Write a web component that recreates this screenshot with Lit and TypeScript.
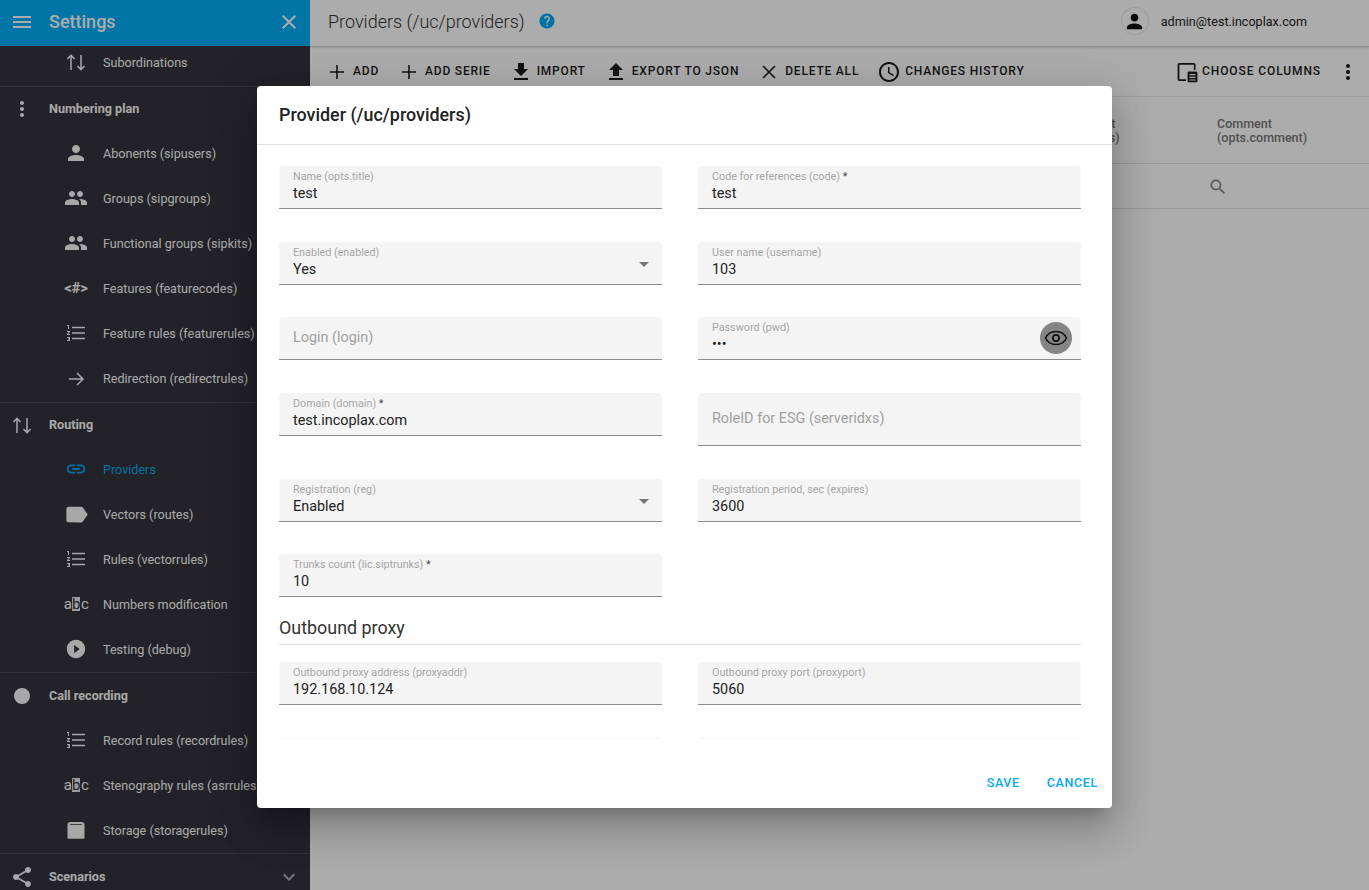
import { LitElement, html, svg, css } from "lit";
import { customElement } from "lit/decorators.js";

const p = (d: string) => svg`<path d=${d}></path>`;
const line = (d: string, w = 1.5) =>
  svg`<path d=${d} fill="none" stroke="currentColor" stroke-width=${w}></path>`;
const numbered = svg`<path d="M3 17h2v.5H4v1h1v.5H3v1h3v-4H3v1zm1-9h1V4H3v1h1v3zm-1 3h1.8L3 13.1v.9h3v-1H4.2L6 10.9V10H3v1z"></path><path d="M8 6.5H21M8 12H21M8 17.5H21" fill="none" stroke="currentColor" stroke-width="1.4"></path>`;
const I: Record<string, any> = {
  menu: p("M3 18h18v-2H3v2zm0-5h18v-2H3v2zm0-7v2h18V6H3z"),
  close: p("M19 6.41L17.59 5 12 10.59 6.41 5 5 6.41 10.59 12 5 17.59 6.41 19 12 13.41 17.59 19 19 17.59 13.41 12z"),
  swap: line("M7 20V5.5M3.4 9 7 5.4 10.6 9M17 5v14.5M13.4 16 17 19.6 20.6 16"),
  dots: p("M12 8c1.1 0 2-.9 2-2s-.9-2-2-2-2 .9-2 2 .9 2 2 2zm0 2c-1.1 0-2 .9-2 2s.9 2 2 2 2-.9 2-2-.9-2-2-2zm0 6c-1.1 0-2 .9-2 2s.9 2 2 2 2-.9 2-2-.9-2-2-2z"),
  person: p("M12 12c2.21 0 4-1.79 4-4s-1.79-4-4-4-4 1.79-4 4 1.79 4 4 4zm0 2c-2.67 0-8 1.34-8 4v2h16v-2c0-2.66-5.33-4-8-4z"),
  group: p("M16 11c1.66 0 2.99-1.34 2.99-3S17.66 5 16 5c-1.66 0-3 1.34-3 3s1.34 3 3 3zm-8 0c1.66 0 2.99-1.34 2.99-3S9.66 5 8 5C6.34 5 5 6.34 5 8s1.34 3 3 3zm0 2c-2.33 0-7 1.17-7 3.5V19h14v-2.5c0-2.33-4.67-3.5-7-3.5zm8 0c-.29 0-.62.02-.97.05 1.16.84 1.97 1.97 1.97 3.45V19h6v-2.5c0-2.33-4.67-3.5-7-3.5z"),
  numbered,
  arrow: line("M5 13H19M13 7 19 13 13 19"),
  link: p("M3.9 12c0-1.71 1.39-3.1 3.1-3.1h4V7H7c-2.76 0-5 2.24-5 5s2.24 5 5 5h4v-1.9H7c-1.71 0-3.1-1.39-3.1-3.1zM8 13h8v-2H8v2zm9-6h-4v1.9h4c1.71 0 3.1 1.39 3.1 3.1s-1.39 3.1-3.1 3.1h-4V17h4c2.76 0 5-2.24 5-5s-2.24-5-5-5z"),
  label: p("M17.63 5.84C17.27 5.33 16.67 5 16 5L5 5.01C3.9 5.01 3 5.9 3 7v10c0 1.1.9 1.99 2 1.99L16 19c.67 0 1.27-.33 1.63-.84L22 12l-4.37-6.16z"),
  play: p("M12 2C6.48 2 2 6.48 2 12s4.48 10 10 10 10-4.48 10-10S17.52 2 12 2zm-2 14.5v-9l6 4.5-6 4.5z"),
  circle: svg`<circle cx="12" cy="12" r="8"></circle>`,
  storage: svg`<path fill-rule="evenodd" d="M6.5 4h11C19.4 4 20.5 5.2 20.5 7v12.2c0 .9-.7 1.6-1.6 1.6H5.1c-.9 0-1.6-.7-1.6-1.6V7C3.5 5.2 4.6 4 6.5 4zM6 6.2v.8h12v-.8z"></path>`,
  share: p("M18 16.08c-.76 0-1.44.3-1.96.77L8.91 12.7c.05-.23.09-.46.09-.7s-.04-.47-.09-.7l7.05-4.11c.54.5 1.25.81 2.04.81 1.66 0 3-1.34 3-3s-1.34-3-3-3-3 1.34-3 3c0 .24.04.47.09.7L8.04 9.81C7.5 9.31 6.79 9 6 9c-1.66 0-3 1.34-3 3s1.34 3 3 3c.79 0 1.5-.31 2.04-.81l7.12 4.16c-.05.21-.08.43-.08.65 0 1.61 1.31 2.92 2.92 2.92 1.61 0 2.92-1.31 2.92-2.92s-1.31-2.92-2.92-2.92z"),
  chevron: p("M16.59 8.59L12 13.17 7.41 8.59 6 10l6 6 6-6z"),
  help: p("M12 2C6.48 2 2 6.48 2 12s4.48 10 10 10 10-4.48 10-10S17.52 2 12 2zm1 17h-2v-2h2v2zm2.07-7.75l-.9.92C13.45 12.9 13 13.5 13 15h-2v-.5c0-1.1.45-2.1 1.17-2.83l1.24-1.26c.37-.36.59-.86.59-1.41 0-1.1-.9-2-2-2s-2 .9-2 2H8c0-2.21 1.79-4 4-4s4 1.79 4 4c0 .88-.36 1.68-.93 2.25z"),
  add: line("M12 5V19M5 12H19", 1.6),
  del: line("M6 6L18 18M18 6L6 18", 1.6),
  download: p("M19 9h-4V3H9v6H5l7 7 7-7zM5 18v2h14v-2H5z"),
  upload: p("M9 16h6v-6h4l-7-7-7 7h4zm-4 2h14v2H5z"),
  clock: p("M11.99 2C6.47 2 2 6.48 2 12s4.47 10 9.99 10C17.52 22 22 17.52 22 12S17.52 2 11.99 2zM12 20c-4.42 0-8-3.58-8-8s3.58-8 8-8 8 3.58 8 8-3.58 8-8 8zm.5-13H11v6l5.25 3.15.75-1.23-4.5-2.67z"),
  search: p("M15.5 14h-.79l-.28-.27C15.41 12.59 16 11.11 16 9.5 16 5.91 13.09 3 9.5 3S3 5.91 3 9.5 5.91 16 9.5 16c1.61 0 3.09-.59 4.23-1.57l.27.28v.79l5 4.99L20.49 19l-4.99-5zm-6 0C7.01 14 5 11.99 5 9.5S7.01 5 9.5 5 14 7.01 14 9.5 11.99 14 9.5 14z"),
  eye: svg`<path d="M1.5 12C3.3 7.9 7.3 5.5 12 5.5s8.7 2.4 10.5 6.5c-1.8 4.1-5.8 6.5-10.5 6.5S3.3 16.100 1.5 12z" fill="none" stroke="currentColor" stroke-width="1.5"></path><circle cx="12" cy="12" r="3.1" fill="none" stroke="currentColor" stroke-width="1.7"></circle>`,
  columns: svg`<path fill-rule="evenodd" d="M4.5 3h14.2c1.1 0 1.8.8 1.8 1.8V10h-1.6V4.7H4.4v14.6H11V21H4.5C3.4 21 2.6 20.2 2.6 19V4.8C2.6 3.8 3.4 3 4.5 3z"></path><path fill-rule="evenodd" d="M14 11.5h7c.8 0 1.4.6 1.4 1.4v8c0 .8-.6 1.4-1.4 1.4h-7c-.8 0-1.4-.6-1.4-1.4v-8c0-.8.6-1.4 1.4-1.4zM14.5 14v1.200h6V14zm0 2.700v1.200h6v-1.200zm0 2.700v1.200h6v-1.200z"></path>`,
  caret: p("M7 10l5 5 5-5z"),
};

const ic = (name: string, cls = "") =>
  html`<svg class="i ${cls}" viewBox="0 0 24 24" aria-hidden="true">${I[name]}</svg>`;

type Item = { n: string; t: string; cls?: string; active?: boolean };
type Group = { head?: [string, string, string?]; items: Item[]; tight?: boolean; chevron?: boolean };

const groups: Group[] = [
  { items: [{ n: "swap", t: "Subordinations" }] },
  {
    head: ["dots", "Numbering plan"],
    items: [
      { n: "person", t: "Abonents (sipusers)" },
      { n: "group", t: "Groups (sipgroups)" },
      { n: "group", t: "Functional groups (sipkits)" },
      { n: "code", t: "Features (featurecodes)" },
      { n: "numbered", t: "Feature rules (featurerules)" },
      { n: "arrow", t: "Redirection (redirectrules)" },
    ],
  },
  {
    head: ["swap", "Routing"],
    tight: true,
    items: [
      { n: "link", t: "Providers", active: true, cls: "s22" },
      { n: "label", t: "Vectors (routes)", cls: "s27" },
      { n: "numbered", t: "Rules (vectorrules)" },
      { n: "abc", t: "Numbers modification" },
      { n: "play", t: "Testing (debug)", cls: "s22" },
    ],
  },
  {
    head: ["circle", "Call recording"],
    tight: true,
    items: [
      { n: "numbered", t: "Record rules (recordrules)" },
      { n: "abc", t: "Stenography rules (asrrules)" },
      { n: "storage", t: "Storage (storagerules)" },
    ],
  },
  { head: ["share", "Scenarios"], chevron: true, items: [] },
];

type F = { l: string; v?: string; req?: boolean; select?: boolean; tall?: boolean; eye?: boolean; empty?: boolean };
const main: F[] = [
  { l: "Name (opts.title)", v: "test" },
  { l: "Code for references (code)", v: "test", req: true },
  { l: "Enabled (enabled)", v: "Yes", select: true },
  { l: "User name (username)", v: "103" },
  { l: "Login (login)", empty: true },
  { l: "Password (pwd)", v: "•••", eye: true },
  { l: "Domain (domain)", v: "test.incoplax.com", req: true },
  { l: "RoleID for ESG (serveridxs)", empty: true, tall: true },
  { l: "Registration (reg)", v: "Enabled", select: true },
  { l: "Registration period, sec (expires)", v: "3600" },
  { l: "Trunks count (lic.siptrunks)", v: "10", req: true },
];
const proxy: F[] = [
  { l: "Outbound proxy address (proxyaddr)", v: "192.168.10.124" },
  { l: "Outbound proxy port (proxyport)", v: "5060" },
  { l: "", empty: true },
  { l: "", empty: true },
];

const tools: [string, string][] = [
  ["add", "Add"],
  ["add", "Add serie"],
  ["download", "Import"],
  ["upload", "Export to JSON"],
  ["del", "Delete all"],
  ["clock", "Changes history"],
];

@customElement("app-root")
export class AppRoot extends LitElement {
  static styles = css`
    :host {
      display: block;
      height: 100vh;
      overflow: hidden;
      font-family: Roboto, "Liberation Sans", sans-serif;
      background: #fff;
      color: #222;
    }
    .page {
      position: relative;
      height: 100%;
      display: grid;
      grid-template-columns: 310px 1fr;
      overflow: hidden;
    }
    .i {
      width: 24px;
      height: 24px;
      fill: currentColor;
      flex: none;
      display: block;
    }
    .s22 { width: 22px; height: 22px; margin: 1px; }
    .s27 { width: 27px; height: 27px; margin: -1.5px; }
    .s20 { width: 20px; height: 20px; margin: 2px; }

    /* Sidebar */
    .side {
      background: #33333c;
      color: #fafafa;
      display: flex;
      flex-direction: column;
      height: 100%;
      min-height: 0;
      font-size: 12.6px;
    }
    .side-top {
      height: 46px;
      flex: none;
      background: #00aef7;
      color: #fff;
      display: flex;
      align-items: center;
      padding: 0 9px 3px 10px;
      box-sizing: border-box;
      position: relative;
      z-index: 1;
    }
    .side-top .ttl {
      margin-left: 15px;
      font-size: 18px;
      font-weight: 500;
      flex: 1;
    }
    .nav { flex: 1; min-height: 0; overflow: hidden; }
    .nav-in { margin-top: -5px; }
    .grp { border-top: 1px solid #4c4c55; }
    .grp:first-child { border-top: 0; }
    .grp.tight { margin-bottom: -1px; }
    .grp.tight + .grp { padding-top: 1px; }
    .head {
      height: 45px;
      box-sizing: border-box;
      padding: 0 9px 2px 10px;
      display: flex;
      align-items: center;
      gap: 15px;
      font-weight: 700;
    }
    .head .t { flex: 1; }
    .chev { color: #b0b0b0; }
    .item {
      height: 45px;
      box-sizing: border-box;
      padding: 0 0 3px 64px;
      display: flex;
      align-items: center;
      gap: 15px;
      white-space: nowrap;
    }
    .item.on { color: #00aaf0; }
    .code {
      width: 24px;
      text-align: center;
      font-size: 15px;
      font-weight: 700;
      letter-spacing: -0.2px;
      flex: none;
    }
    .abc {
      width: 24px;
      display: flex;
      justify-content: center;
      align-items: center;
      font-size: 15px;
      line-height: 14px;
      letter-spacing: -0.4px;
      flex: none;
    }
    .abc b {
      font-weight: 400;
      background: #e8e8e8;
      color: #33333c;
      margin: 0 0.5px;
      letter-spacing: 0;
    }

    /* Main */
    .main { min-width: 0; display: flex; flex-direction: column; background: #fff; }
    .bar {
      height: 47px;
      box-sizing: border-box;
      flex: none;
      border-bottom: 1px solid #d0d0d0;
      display: flex;
      align-items: center;
      padding: 0 62px 4px 18px;
      box-shadow: 0 1px 2px rgba(0, 0, 0, 0.12);
    }
    .bar h1 {
      margin: 0;
      font-size: 18px;
      font-weight: 300;
      color: #333;
      white-space: nowrap;
    }
    .help { width: 18px; height: 18px; color: #03a9f4; margin: 0 0 0 13px; }
    .sp { flex: 1; }
    .avatar {
      width: 26px;
      height: 26px;
      border-radius: 50%;
      background: #fff;
      box-shadow: 0 0 0 1px #e8e8e8;
      display: flex;
      align-items: center;
      justify-content: center;
      color: #111;
      margin-right: 13px;
    }
    .avatar .i { width: 23px; height: 23px; }
    .mail { font-size: 12.6px; color: #222; white-space: nowrap; }
    .tools {
      height: 50px;
      flex: none;
      box-sizing: border-box;
      padding: 1px 9px 0 15px;
      display: flex;
      align-items: center;
      gap: 18px;
      border-bottom: 1px solid #e8e8e8;
    }
    .btn {
      display: flex;
      align-items: center;
      gap: 4px;
      font-size: 12px;
      font-weight: 500;
      letter-spacing: 0.8px;
      text-transform: uppercase;
      color: #1c1c1c;
      white-space: nowrap;
    }
    .btn.cc { gap: 3px; margin-right: -3px; letter-spacing: 0.9px; }
    .btn .lbl { position: relative; top: -1px; }
    .more { color: #1c1c1c; }
    .thead {
      height: 67px;
      flex: none;
      box-sizing: border-box;
      padding-top: 2px;
      border-bottom: 1px solid #e0e0e0;
      display: flex;
      align-items: center;
      justify-content: flex-end;
      font-size: 12.5px;
      font-weight: 500;
      line-height: 14px;
      color: #777;
    }
    .thead .c1 { width: 148px; }
    .thead .c2 { width: 152px; }
    .filter {
      height: 45px;
      flex: none;
      box-sizing: border-box;
      padding: 2px 139px 0 0;
      border-bottom: 1px solid #e0e0e0;
      display: flex;
      align-items: center;
      justify-content: flex-end;
      color: #888;
    }

    /* Dialog */
    .back {
      position: absolute;
      inset: 0;
      background: rgba(0, 0, 0, 0.325);
      display: flex;
      justify-content: center;
      align-items: flex-start;
      padding-top: 86px;
      z-index: 5;
    }
    .dlg {
      width: 855px;
      height: 722px;
      background: #fff;
      border-radius: 4px;
      display: flex;
      flex-direction: column;
      box-shadow: 0 11px 15px -7px rgba(0, 0, 0, 0.2), 0 24px 38px 3px rgba(0, 0, 0, 0.14),
        0 9px 46px 8px rgba(0, 0, 0, 0.12);
    }
    .dlg-h {
      height: 59px;
      flex: none;
      box-sizing: border-box;
      border-bottom: 1px solid #e0e0e0;
      padding: 0 22px 2px;
      display: flex;
      align-items: center;
      font-size: 17.9px;
      font-weight: 500;
      color: #222;
    }
    .body {
      height: 594px;
      flex: none;
      overflow: hidden;
      padding: 21.1px 31px 0 22px;
      box-sizing: border-box;
    }
    .form {
      display: grid;
      grid-template-columns: 383px 383px;
      column-gap: 36px;
      row-gap: 32.4px;
      align-items: start;
    }
    .field {
      position: relative;
      height: 43.1px;
      box-sizing: border-box;
      background: #f4f4f4;
      border-radius: 4px 4px 0 0;
      border-bottom: 1px solid #8c8c8c;
      padding: 4px 14px 0;
      display: flex;
      align-items: flex-start;
    }
    .field.tall { height: 53.7px; padding-bottom: 0; }
    .field.empty { align-items: center; padding-top: 0; padding-bottom: 2px; }
    .field.empty.tall { padding-bottom: 0; }
    .f-in { flex: 1; min-width: 0; }
    .f-l { font-size: 10.75px; line-height: 14px; color: #a6a6a6; white-space: nowrap; }
    .f-l .star { color: #444; }
    .f-v { font-size: 14.4px; line-height: 20px; color: #222; white-space: nowrap; }
    .ph { font-size: 14.4px; color: #a0a0a0; }
    .caret { color: #757575; margin: 6px -8px 0 0; }
    .eye {
      position: absolute;
      right: 9px;
      top: 5px;
      width: 32px;
      height: 32px;
      border-radius: 50%;
      background: #858585;
      display: flex;
      align-items: center;
      justify-content: center;
      color: #111;
    }
    .sec {
      margin: 20px 0 17px;
      height: 28px;
      box-sizing: border-box;
      border-bottom: 1px solid #e0e0e0;
      font-size: 17.9px;
      line-height: 21px;
      color: #333;
    }
    .dlg-f {
      flex: 1;
      display: flex;
      justify-content: flex-end;
      gap: 27px;
      padding: 36px 14px 0 0;
      font-size: 12.5px;
      font-weight: 500;
      letter-spacing: 0.65px;
      color: #00aaf5;
      box-sizing: border-box;
      line-height: 16px;
    }
  `;

  private icon(name: string, cls = "") {
    if (name === "code") return html`<span class="code">&lt;#&gt;</span>`;
    if (name === "abc") return html`<span class="abc">a<b>b</b>c</span>`;
    return ic(name, cls);
  }

  private field(f: F) {
    const req = f.req ? html` <span class="star">*</span>` : "";
    if (f.empty)
      return html`<div class="field empty ${f.tall ? "tall" : ""}"><span class="ph">${f.l}</span></div>`;
    return html`<div class="field">
      <div class="f-in">
        <div class="f-l">${f.l}${req}</div>
        <div class="f-v">${f.v}</div>
      </div>
      ${f.select ? ic("caret", "caret") : ""}
      ${f.eye ? html`<span class="eye">${ic("eye")}</span>` : ""}
    </div>`;
  }

  render() {
    return html`<div class="page">
      <aside class="side">
        <div class="side-top">
          ${ic("menu")}<span class="ttl">Settings</span>${ic("close")}
        </div>
        <nav class="nav">
          <div class="nav-in">
            ${groups.map(
              (g) => html`<div class="grp ${g.tight ? "tight" : ""}">
                ${g.head
                  ? html`<div class="head">
                      ${this.icon(g.head[0])}<span class="t">${g.head[1]}</span>
                      ${g.chevron ? ic("chevron", "chev") : ""}
                    </div>`
                  : ""}
                ${g.items.map(
                  (it) => html`<div class="item ${it.active ? "on" : ""}">
                    ${this.icon(it.n, it.cls)}<span>${it.t}</span>
                  </div>`
                )}
              </div>`
            )}
          </div>
        </nav>
      </aside>
      <main class="main">
        <header class="bar">
          <h1>Providers (/uc/providers)</h1>
          ${ic("help", "help")}
          <span class="sp"></span>
          <span class="avatar">${ic("person")}</span>
          <span class="mail">admin@test.incoplax.com</span>
        </header>
        <div class="tools">
          ${tools.map(([i, t]) => html`<span class="btn">${ic(i)}<span class="lbl">${t}</span></span>`)}
          <span class="sp"></span>
          <span class="btn cc">${ic("columns")}<span class="lbl">Choose columns</span></span>
          ${ic("dots", "more")}
        </div>
        <div class="thead">
          <div class="c1">Account<br />(options)</div>
          <div class="c2">Comment<br />(opts.comment)</div>
        </div>
        <div class="filter">${ic("search", "s20")}</div>
      </main>
      <div class="back">
        <section class="dlg">
          <div class="dlg-h">Provider (/uc/providers)</div>
          <div class="body">
            <div class="form">${main.map((f) => this.field(f))}</div>
            <div class="sec">Outbound proxy</div>
            <div class="form">${proxy.map((f) => this.field(f))}</div>
          </div>
          <div class="dlg-f"><span>SAVE</span><span>CANCEL</span></div>
        </section>
      </div>
    </div>`;
  }
}
